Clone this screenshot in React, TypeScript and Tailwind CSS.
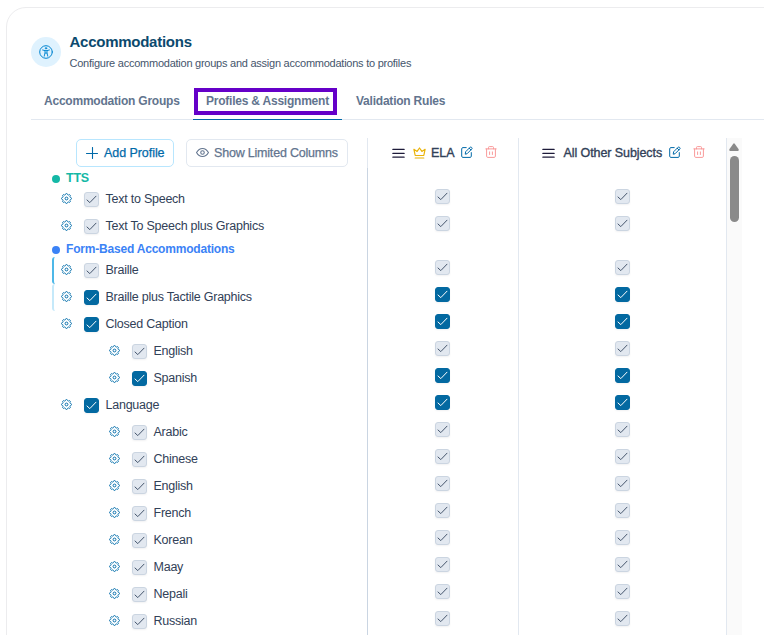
import React from "react";

type IconProps = { className?: string };

const gearPath = (() => {
  const points: string[] = [];
  for (let i = 0; i <= 96; i++) {
    const a = (i / 96) * Math.PI * 2;
    const wave = Math.max(-1, Math.min(1, Math.cos(a * 8) * 1.5));
    const r = 5.65 + wave * 0.75;
    points.push(`${(7 + r * Math.sin(a)).toFixed(2)} ${(7 - r * Math.cos(a)).toFixed(2)}`);
  }
  return "M" + points.join("L") + "Z";
})();

function Gear() {
  return (
    <svg viewBox="0 0 14 14" className="size-[11px] shrink-0 text-sky-700" fill="none" stroke="currentColor" strokeWidth="1.25" strokeLinejoin="round">
      <path d={gearPath} />
      <circle cx="7" cy="7" r="1.8" />
    </svg>
  );
}

function PersonIcon() {
  return (
    <svg viewBox="0 0 14 14" className="size-[14px] text-sky-600" fill="none" stroke="currentColor" strokeLinecap="round" strokeLinejoin="round">
      <circle cx="7" cy="7" r="6.3" strokeWidth="1" />
      <circle cx="7" cy="3.3" r="0.8" fill="currentColor" strokeWidth="0.6" />
      <path d="M3.6 5L6 5.6V8L5.2 11.2M10.4 5L8 5.6V8L8.8 11.2M6 5.6H8M6.2 8.2L7 7.8L7.8 8.2" strokeWidth="0.95" />
    </svg>
  );
}

function PlusIcon() {
  return (
    <svg viewBox="0 0 12 12" className="size-3" fill="none" stroke="currentColor" strokeWidth="1.1" strokeLinecap="round">
      <path d="M6.5 .5V11.5M.5 6.5H11.5" />
    </svg>
  );
}

function EyeIcon() {
  return (
    <svg viewBox="0 0 14 14" className="mb-px size-[13px]" fill="none" stroke="currentColor" strokeWidth="1.15" strokeLinejoin="round">
      <path d="M.6 7C2.2 4.1 4.4 2.6 7 2.6S11.8 4.1 13.4 7C11.8 9.9 9.6 11.4 7 11.4S2.2 9.9.6 7Z" />
      <circle cx="7" cy="7" r="1.9" />
    </svg>
  );
}

function BarsIcon() {
  return (
    <svg viewBox="0 0 13 10" className="h-[10px] w-[13px] shrink-0 text-[#1e1b3a]" fill="none" stroke="currentColor" strokeWidth="1.3" strokeLinecap="round">
      <path d="M.9 1.4H12.1M.9 5.4H12.1M.9 9.2H12.1" />
    </svg>
  );
}

function CrownIcon({ className = "" }: IconProps) {
  return (
    <svg viewBox="0 0 13 12" className={`mb-px h-3 w-[13px] shrink-0 text-[#eab308] ${className}`} fill="none" stroke="currentColor" strokeWidth="1.2" strokeLinecap="round" strokeLinejoin="round">
      <path d="M2.2 8.5L.9 2.3L4.1 4.4L6.5 1L8.9 4.4L12.1 2.3L10.8 8.5ZM2.2 11H10.8" />
    </svg>
  );
}

function EditIcon({ className = "" }: IconProps) {
  return (
    <svg viewBox="0 0 12 12" className={`mb-[2px] size-3 shrink-0 text-sky-700 ${className}`} fill="none" stroke="currentColor" strokeWidth="1" strokeLinecap="round" strokeLinejoin="round">
      <path d="M5.2 1.6H2C1.2 1.6 .7 2.1.7 2.8V10.2C.7 10.9 1.2 11.4 1.9 11.4H9.1C9.8 11.4 10.3 10.9 10.3 10.2V6.6" />
      <path d="M4.3 7.8L4.6 5.8L9.2 1.2C9.9.4 11.7 2.1 10.9 2.9L6.3 7.5ZM8.2 2.2L9.9 3.9" />
    </svg>
  );
}

function TrashIcon({ className = "" }: IconProps) {
  return (
    <svg viewBox="0 0 12 12" className={`mb-[2px] size-3 shrink-0 text-[#f99a9a] ${className}`} fill="none" stroke="currentColor" strokeWidth="1" strokeLinecap="round" strokeLinejoin="round">
      <path d="M.8 2.9H11.2M3.5 2.9V1.4C3.5.9 3.8.6 4.3.6H7.7C8.2.6 8.5.9 8.5 1.4V2.9M1.6 2.9V10.2C1.6 11 2.1 11.4 2.8 11.4H9.2C9.9 11.4 10.4 11 10.4 10.2V2.9M4.6 5.9V8.5M7.4 5.9V8.5" />
    </svg>
  );
}

function Check({ on }: { on: boolean }) {
  return (
    <span
      className={`flex size-[15px] shrink-0 items-center justify-center rounded-[3px] border shadow-[0_1px_2px_rgba(15,23,42,0.06)] ${
        on ? "border-[#0369a1] bg-[#0369a1] text-white" : "border-[#cbd5e1] bg-[#e2e8f0] text-slate-600"
      }`}
    >
      <svg viewBox="0 0 11 11" className="size-[11px]" fill="none" stroke="currentColor" strokeWidth="1" strokeLinecap="round" strokeLinejoin="round">
        <path d="M1 6L3.8 8.6L10 2.2" />
      </svg>
    </span>
  );
}

type Item = { name: string; on?: boolean; child?: boolean; edge?: string };

const tts: Item[] = [{ name: "Text to Speech" }, { name: "Text To Speech plus Graphics" }];

const forms: Item[] = [
  { name: "Braille", edge: "border-[#4db8e8]" },
  { name: "Braille plus Tactile Graphics", on: true, edge: "border-[#c5e9fa]" },
  { name: "Closed Caption", on: true },
  { name: "English", child: true },
  { name: "Spanish", on: true, child: true },
  { name: "Language", on: true },
  { name: "Arabic", child: true },
  { name: "Chinese", child: true },
  { name: "English", child: true },
  { name: "French", child: true },
  { name: "Korean", child: true },
  { name: "Maay", child: true },
  { name: "Nepali", child: true },
  { name: "Russian", child: true },
];

function Row({ item }: { item: Item }) {
  return (
    <div className={`flex h-[27px] items-center rounded-l-[3px] border-l-2 ${item.edge ?? "border-transparent"} ${item.child ? "pl-[55px]" : "pl-[7px]"}`}>
      <span className="mb-[3px] flex">
        <Gear />
      </span>
      <span className="ml-3 flex">
        <Check on={!!item.on} />
      </span>
      <span className="mb-px ml-[6.5px] text-[12.5px] leading-5 tracking-[-0.24px] text-slate-700">{item.name}</span>
    </div>
  );
}

function GroupTitle({ label, className }: { label: string; className: string }) {
  return (
    <div className={`flex h-[15px] items-center gap-[6px] font-bold ${className}`}>
      <span className="size-2 rounded-full bg-current" />
      {label}
    </div>
  );
}

function Column({ children, className, checksClass = "" }: { children: React.ReactNode; className: string; checksClass?: string }) {
  return (
    <div className={`flex flex-col items-center border-r border-slate-200 ${className}`}>
      <div className="flex h-[30px] w-full items-center text-[12.5px] tracking-[-0.08px] text-slate-700 [-webkit-text-stroke:0.35px]">{children}</div>
      <div className={`mt-[15px] flex flex-col ${checksClass}`}>
        {tts.map((t) => (
          <div key={t.name} className="flex h-[27px] items-center"><Check on={!!t.on} /></div>
        ))}
      </div>
      <div className={`mt-[17px] flex flex-col ${checksClass}`}>
        {forms.map((t, i) => (
          <div key={i} className="flex h-[27px] items-center"><Check on={!!t.on} /></div>
        ))}
      </div>
    </div>
  );
}

export default function App() {
  return (
    <div className="h-[635px] w-[764px] overflow-hidden bg-white pl-[6px] pt-[7px] font-['Liberation_Sans',Arial,sans-serif]">
      <div className="flex h-[680px] w-[800px] flex-col rounded-[20px] border border-[#ececee] bg-white pl-6 pt-[25px]">
        <header className="flex h-10 gap-[8.5px]">
          <div className="mt-1 flex size-[30px] items-center justify-center rounded-full bg-sky-100">
            <PersonIcon />
          </div>
          <div>
            <h1 className="text-[15px] font-bold leading-[18px] tracking-[-0.26px] text-[#0c4a6e]">Accommodations</h1>
            <p className="mt-[5px] text-[11px] leading-[15px] tracking-[-0.245px] text-slate-600">
              Configure accommodation groups and assign accommodations to profiles
            </p>
          </div>
        </header>

        <nav className="mt-[15px] flex h-[32px] border-b border-slate-200 text-[12px] font-bold tracking-[-0.22px] text-slate-500">
          <div className="w-[162px] pl-[13px] pt-[5px] leading-4">Accommodation Groups</div>
          <div className="-mb-px flex w-[149px] border-b border-sky-700 pl-px">
            <div className="h-[27px] w-[143px] border-4 border-[#6500c8] pl-2 pt-px leading-4">
              <span className="whitespace-nowrap">Profiles &amp; Assignment</span>
            </div>
          </div>
          <div className="pl-[14px] pt-[5px] leading-4">Validation Rules</div>
        </nav>

        <main className="mt-[18px] flex h-[510px]">
          <section className="w-[337px]">
            <div className="flex h-[30px] gap-3 border-r border-slate-200 pl-[45px] pt-px text-[12.5px] tracking-[-0.2px] [-webkit-text-stroke:0.25px]">
              <button className="flex h-7 w-[98px] shrink-0 items-center gap-[6px] whitespace-nowrap rounded-[5px] border border-sky-200 pl-[9px] tracking-[-0.06px] text-sky-700">
                <PlusIcon />
                Add Profile
              </button>
              <button className="flex h-7 w-[162px] shrink-0 items-center gap-[5px] whitespace-nowrap rounded-[5px] border border-slate-200 pl-[9px] text-slate-500">
                <EyeIcon />
                Show Limited Columns
              </button>
            </div>
            <div className="h-[480px] border-r border-slate-300 pl-[21px] pt-[3px]">
              <GroupTitle label="TTS" className="text-[12.5px] leading-[15px] tracking-[-0.2px] text-[#14b8a6]" />
              {tts.map((t) => <Row key={t.name} item={t} />)}
              <GroupTitle label="Form-Based Accommodations" className="mt-[2px] text-[12px] leading-[17px] tracking-[-0.2px] text-[#3b82f6]" />
              {forms.map((t, i) => <Row key={i} item={t} />)}
            </div>
          </section>

          <Column className="w-[151px]" checksClass="mr-px">
            <span className="ml-6 flex"><BarsIcon /></span>
            <CrownIcon className="ml-2" />
            <span className="ml-[5px] w-6 whitespace-nowrap">ELA</span>
            <EditIcon className="ml-[6px]" />
            <TrashIcon className="ml-3" />
          </Column>
          <Column className="w-[208px]">
            <span className="ml-[23px] flex"><BarsIcon /></span>
            <span className="ml-[8.5px] w-[98.5px] whitespace-nowrap">All Other Subjects</span>
            <EditIcon className="ml-[7px]" />
            <TrashIcon className="ml-3" />
          </Column>
          <div className="flex w-[15px] flex-col items-center bg-[#fafafa] pr-px pt-[5px]">
            <svg viewBox="0 0 10 8" className="h-2 w-[10px] fill-[#8a8a8a]">
              <path d="M4.3.7Q5 0 5.7.7L9.5 6Q10.2 7.8 8.8 8H1.2Q-.2 7.8.5 6Z" />
            </svg>
            <div className="mt-[5px] h-[66px] w-[9px] rounded-full bg-[#8a8a8a]" />
          </div>
        </main>
      </div>
    </div>
  );
}
